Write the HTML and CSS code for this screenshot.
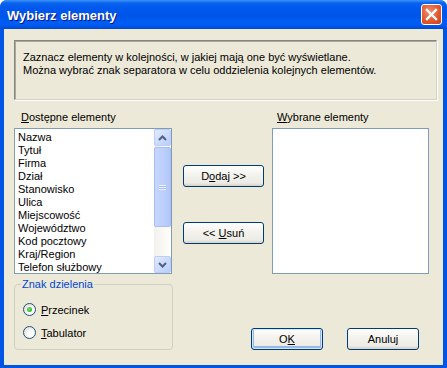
FILE: index.html
```html
<!DOCTYPE html>
<html lang="pl">
<head>
    <meta charset="UTF-8">
    <title>Wybierz elementy</title>
    <link rel="stylesheet" href="styles.css">
</head>
<body>
    <div class="window">
        <div class="titlebar">
            <span class="title">Wybierz elementy</span>
            <div class="close">
                <svg width="13" height="13" viewBox="0 0 13 13"><path d="M2 2 L11 11 M11 2 L2 11" stroke="#fff" stroke-width="2.4" stroke-linecap="square"/></svg>
            </div>
        </div>
        <div class="client">
            <div class="info">
                Zaznacz elementy w kolejności, w jakiej mają one być wyświetlane.<br>
                Można wybrać znak separatora w celu oddzielenia kolejnych elementów.
            </div>

            <div class="lists">
                <div class="col">
                    <div class="label left-label"><u>D</u>ostępne elementy</div>
                    <div class="listbox">
                        <ul class="items">
                            <li>Nazwa</li>
                            <li>Tytuł</li>
                            <li>Firma</li>
                            <li>Dział</li>
                            <li>Stanowisko</li>
                            <li>Ulica</li>
                            <li>Miejscowość</li>
                            <li>Województwo</li>
                            <li>Kod pocztowy</li>
                            <li>Kraj/Region</li>
                            <li>Telefon służbowy</li>
                        </ul>
                        <div class="scrollbar">
                            <div class="sb-btn">
                                <svg width="9" height="6" viewBox="0 0 9 6"><path d="M1 5 L4.5 1.5 L8 5" fill="none" stroke="#4d6185" stroke-width="2"/></svg>
                            </div>
                            <div class="sb-thumb">
                                <svg width="7" height="7" viewBox="0 0 7 7"><path d="M0 1.5 H7 M0 3.5 H7 M0 5.5 H7" stroke="#eef3fe" stroke-width="1"/><path d="M0 2.5 H7 M0 4.5 H7" stroke="#8cb0f8" stroke-width="1" opacity="0.6"/></svg>
                            </div>
                            <div class="sb-track"></div>
                            <div class="sb-btn">
                                <svg width="9" height="6" viewBox="0 0 9 6"><path d="M1 1 L4.5 4.5 L8 1" fill="none" stroke="#4d6185" stroke-width="2"/></svg>
                            </div>
                        </div>
                    </div>
                </div>

                <div class="mid">
                    <div class="btn add"><span>D<u>o</u>daj &gt;&gt;</span></div>
                    <div class="btn remove"><span>&lt;&lt; <u>U</u>suń</span></div>
                </div>

                <div class="col">
                    <div class="label right-label"><u>W</u>ybrane elementy</div>
                    <div class="listbox right-list"></div>
                </div>
            </div>

            <div class="bottom">
                <fieldset class="group">
                    <legend>Znak dzielenia</legend>
                    <div class="radio-row">
                        <span class="radio checked"><span class="dot"></span></span>
                        <span><u>P</u>rzecinek</span>
                    </div>
                    <div class="radio-row">
                        <span class="radio"></span>
                        <span><u>T</u>abulator</span>
                    </div>
                </fieldset>
                <div class="actions">
                    <div class="btn default"><span>O<u>K</u></span></div>
                    <div class="btn"><span>Anuluj</span></div>
                </div>
            </div>
        </div>
    </div>
</body>
</html>
```

FILE: styles.css
```css
body {
    margin: 0;
    background: #fff;
    font-family: "Liberation Sans", Arial, sans-serif;
    font-size: 11px;
    color: #000;
}
u {
    text-decoration: underline;
    text-underline-offset: 1px;
}

.window {
    width: 447px;
    height: 368px;
    box-sizing: border-box;
    background: #0055e5;
    border-radius: 7px 7px 0 0;
    display: flex;
    flex-direction: column;
    overflow: hidden;
}

.titlebar {
    height: 29px;
    flex: none;
    display: flex;
    align-items: center;
    justify-content: space-between;
    padding: 0 5px 0 7px;
    background: linear-gradient(#3d95ff 0px, #0a63ec 3px, #0058ee 8px, #0055e8 16px, #005ef5 24px, #0053e4 27px, #0046d0 29px);
}
.title {
    color: #fff;
    font-family: "Liberation Sans", Arial, sans-serif;
    font-weight: bold;
    font-size: 13px;
    text-shadow: 1px 1px 0 #0a1883;
    margin-top: 1px;
}
.close {
    width: 21px;
    height: 21px;
    box-sizing: border-box;
    border: 1px solid #fff;
    border-radius: 3px;
    background: radial-gradient(circle at 40% 35%, #f08e6d 0%, #e2592f 55%, #c8401b 100%);
    display: flex;
    align-items: center;
    justify-content: center;
}

.client {
    flex: 1;
    margin: 0 4px 3px 4px;
    background: #ece9d8;
    padding: 11px 0 0 10px;
}

.info {
    width: 423px;
    height: 60px;
    box-sizing: border-box;
    border: 1px solid #848484;
    border-right-color: #d4d0c8;
    border-bottom-color: #d4d0c8;
    box-shadow: inset 1px 1px 0 #aca899, 1px 1px 0 #fff;
    padding: 10px 0 0 8px;
    line-height: 13px;
}

.lists {
    display: flex;
    margin-top: 11px;
}
.label {
    height: 13px;
    line-height: 13px;
    margin-bottom: 4px;
}
.left-label { padding-left: 7px; }
.right-label { padding-left: 5px; }

.listbox {
    width: 158px;
    height: 146px;
    box-sizing: border-box;
    border: 1px solid #7f9db9;
    background: #fff;
    display: flex;
}
.right-list { width: 157px; }

.items {
    list-style: none;
    margin: 0;
    padding: 2px 0 0 3px;
    flex: 1;
    line-height: 13px;
    overflow: hidden;
}

.scrollbar {
    width: 17px;
    flex: none;
    display: flex;
    flex-direction: column;
    background: linear-gradient(90deg, #f3f1ec, #fefefb);
}
.sb-btn {
    height: 17px;
    box-sizing: border-box;
    border: 1px solid #bccefa;
    border-radius: 2px;
    background: linear-gradient(135deg, #e1eafe, #b9cdfa);
    display: flex;
    align-items: center;
    justify-content: center;
    flex: none;
}
.sb-thumb {
    height: 80px;
    margin-top: 1px;
    box-sizing: border-box;
    border: 1px solid #a9bdf0;
    border-radius: 2px;
    background: linear-gradient(90deg, #c6d6fd, #bccffb 60%, #b0c6f7);
    display: flex;
    align-items: center;
    justify-content: center;
    flex: none;
}
.sb-track { flex: 1; }

.mid {
    width: 100px;
    padding-left: 11px;
    box-sizing: border-box;
    padding-top: 54px;
}

.btn {
    width: 81px;
    height: 22px;
    box-sizing: border-box;
    border: 1px solid #003c74;
    border-radius: 3px;
    background: linear-gradient(#ffffff, #f4f3ee 40%, #ecebe6 85%, #d6d0c5);
    display: flex;
    align-items: center;
    justify-content: center;
}
.remove { margin-top: 35px; }

.bottom {
    display: flex;
    align-items: flex-end;
    margin-top: 4px;
}
.group {
    width: 159px;
    height: 72px;
    box-sizing: border-box;
    margin: 0;
    border: 1px solid #d0d0bf;
    border-radius: 4px;
    padding: 2px 0 0 8px;
}
.group legend {
    color: #0046d5;
    padding: 0 1px;
    margin-left: -2px;
    line-height: 13px;
}
.radio-row {
    display: flex;
    align-items: center;
    gap: 5px;
    height: 13px;
    margin-top: 10px;
}
.radio-row + .radio-row { margin-top: 10px; }
.radio {
    width: 13px;
    height: 13px;
    box-sizing: border-box;
    border: 1px solid #1c5180;
    border-radius: 50%;
    background: radial-gradient(circle at 65% 65%, #ffffff 20%, #e7e6df 70%, #d8d5c8);
    display: flex;
    align-items: center;
    justify-content: center;
}
.dot {
    width: 5px;
    height: 5px;
    border-radius: 50%;
    background: radial-gradient(circle at 40% 40%, #6ce36c, #21a121);
}

.actions {
    display: flex;
    gap: 24px;
    margin-left: 78px;
}
.actions .btn { width: 72px; }
.default {
    box-shadow: inset 0 0 0 1px #cee7ff, inset 0 -1px 0 2px #98b8ea;
}
```
